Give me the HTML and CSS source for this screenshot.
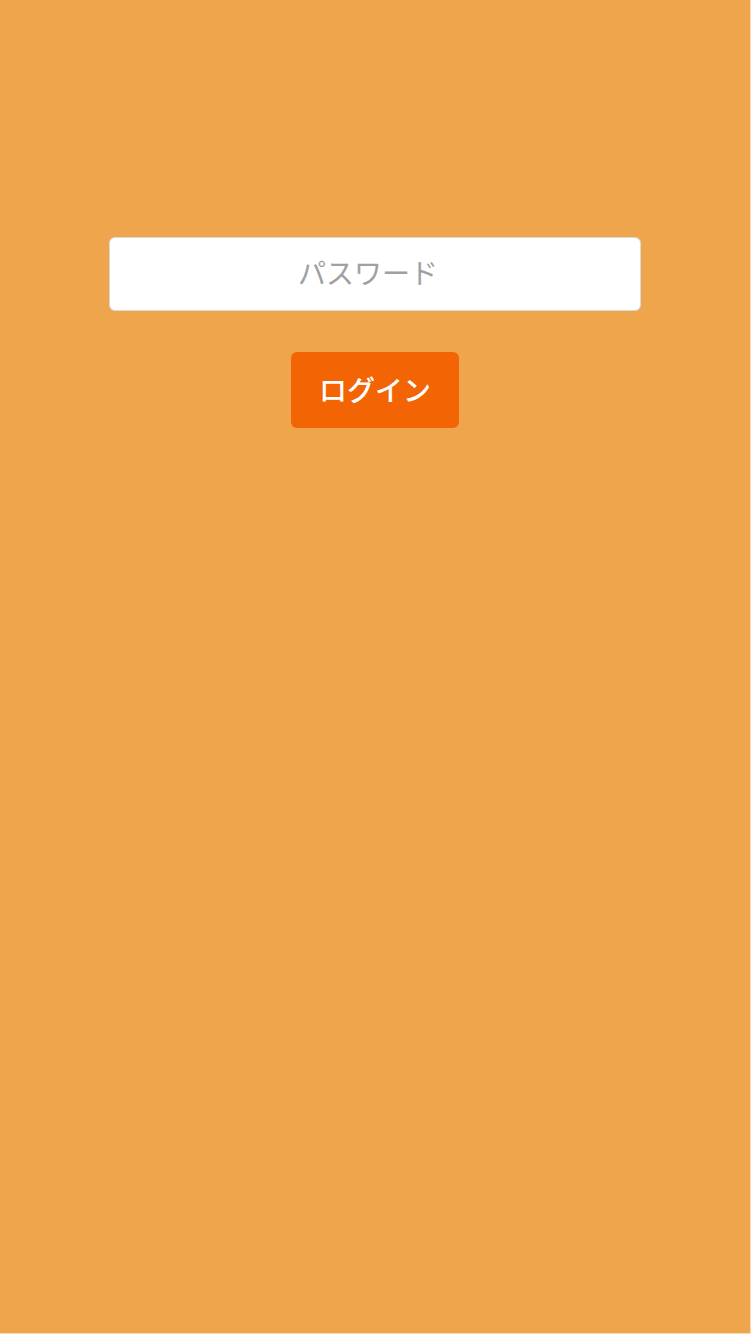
FILE: index.html
```html
<!DOCTYPE html>
<html lang="ja">
<head>
<meta charset="utf-8">
<title>ログイン</title>
<link rel="stylesheet" href="styles.css">
</head>
<body>
<div class="page">
  <form class="login">
    <input class="password" type="password" placeholder="パスワード">
    <button class="submit" type="button">ログイン</button>
  </form>
</div>
</body>
</html>
```
FILE: styles.css
```css
html, body {
  margin: 0;
  padding: 0;
  background: #f8d9b0;
}
.page {
  width: 750px;
  height: 1333px;
  background: #efa54b;
  box-sizing: border-box;
  padding-top: 237px;
  font-family: "Noto Sans CJK JP", "Noto Sans", sans-serif;
}
.login {
  display: flex;
  flex-direction: column;
  align-items: center;
  gap: 41px;
  margin: 0;
}
.password {
  width: 532px;
  height: 74px;
  box-sizing: border-box;
  border: 1px solid #d8d8d8;
  border-radius: 6px;
  background: #fff;
  text-align: center;
  font-family: inherit;
  font-size: 28px;
  color: #333;
  outline: none;
  padding: 0 24px 4px 10px;
}
.password::placeholder {
  color: #a0a0a0;
}
.submit {
  width: 168px;
  height: 76px;
  border: none;
  border-radius: 6px;
  background: #f36504;
  color: #fff;
  font-family: inherit;
  font-size: 28px;
  font-weight: 500;
  padding: 0 0 2px;
  cursor: pointer;
}
```
